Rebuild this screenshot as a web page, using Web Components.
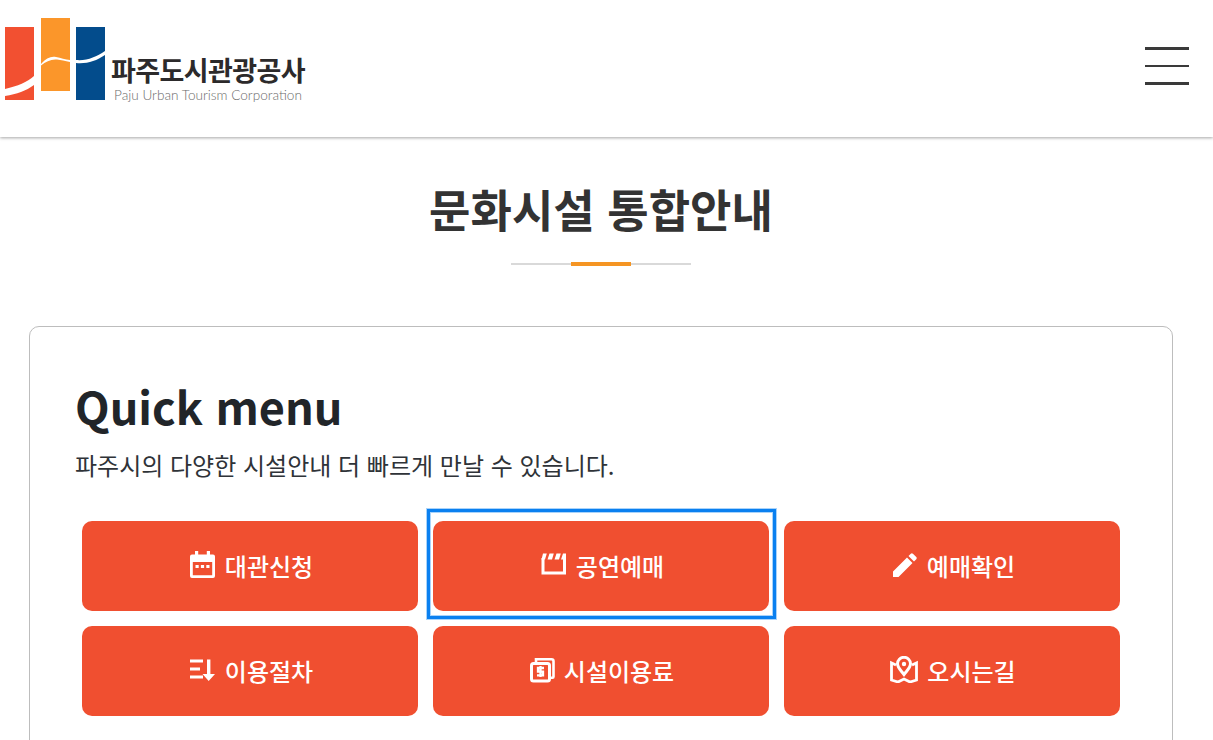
<!DOCTYPE html>
<html lang="ko">
<head>
<meta charset="utf-8">
<title>문화시설 통합안내</title>
<style>
html, body { margin: 0; height: 740px; overflow: hidden; background: #fff; }
body { font-family: "Noto Sans CJK KR", "Noto Sans", sans-serif; color: #212529; }
</style>
</head>
<body>
<site-header></site-header>
<page-title>문화시설 통합안내</page-title>
<quick-menu>
  <quick-button icon="calendar">대관신청</quick-button>
  <quick-button icon="clapper" focused>공연예매</quick-button>
  <quick-button icon="pen">예매확인</quick-button>
  <quick-button icon="sort">이용절차</quick-button>
  <quick-button icon="file">시설이용료</quick-button>
  <quick-button icon="map">오시는길</quick-button>
</quick-menu>

<script>
const ICONS = {
    calendar: `<svg width="27" height="27" viewBox="0 0 27 27"><path fill="#fff" fill-rule="evenodd" d="M6 0h3.200v3.500h8.600V0H21v3.500h3a2 2 0 0 1 2 2V25a2 2 0 0 1-2 2H3a2 2 0 0 1-2-2V5.500a2 2 0 0 1 2-2h3zM3.800 11v13.200h19.400V11z"/><path fill="#fff" d="M6.500 14h3.200v3H6.500zM11.900 14h3.200v3h-3.200zM17.300 14h3.200v3h-3.200z"/></svg>`,
    clapper: `<svg width="27" height="27" viewBox="0 0 27 27"><path fill="none" stroke="#fff" stroke-width="3" d="M3 7V22h21.500V3"/><path fill="#fff" d="M3 2.500h3.800L5 8.500H1.500zM9.500 2.500h4.300L12 8.500H7.500zM16.500 2.500h4.300L19 8.500h-4.500zM23 2.500h3V8.500h-5z"/></svg>`,
    pen: `<svg width="27" height="27" viewBox="0 0 27 27"><path fill="#fff" d="M2 26v-5.500L16 6.500 21.500 12 7.500 26zM17.500 5l2.300-2.300a1.500 1.500 0 0 1 2.100 0l3.400 3.400a1.500 1.500 0 0 1 0 2.100L23 10.500z"/></svg>`,
    sort: `<svg width="27" height="27" viewBox="0 0 27 27"><path fill="#fff" d="M1 3.500h13v3H1zM1 11.500h10v3H1zM1 19.500h13v3H1zM18 3.500h3.400v14.500H26L19.700 25l-6.200-7H18z"/></svg>`,
    file: `<svg width="25" height="27" viewBox="0 0 25 27"><path fill="none" stroke="#fff" stroke-width="2.600" d="M6 6V3.300h15.500a2 2 0 0 1 2 2v15.500a1 1 0 0 1-1 1H20"/><rect x="1.500" y="7.500" width="18" height="17.500" rx="2" fill="none" stroke="#fff" stroke-width="3"/><path fill="none" stroke="#fff" stroke-width="2.300" d="M14 12H8v3.700h5v3.700H7M10.500 10v11"/></svg>`,
    map: `<svg width="28" height="27" viewBox="0 0 28 27"><path fill="none" stroke="#fff" stroke-width="3" d="M14 18.500C10.500 14 7.500 11.500 7.500 7.800a6.500 6.500 0 0 1 13 0c0 3.700-3 6.200-6.500 10.700z"/><circle cx="14" cy="8" r="2.200" fill="#fff"/><path fill="none" stroke="#fff" stroke-width="2.800" d="M6 9 1.500 7v17l6.500 2 6-3 6 3 6.500-2V7L22 9"/></svg>`
};

class SiteHeader extends HTMLElement {
    constructor() {
        super();
        this.attachShadow({ mode: 'open' }).innerHTML = `
            <style>
                :host {
                    display: flex;
                    justify-content: space-between;
                    align-items: flex-start;
                    height: 137px;
                    box-sizing: border-box;
                    padding: 18px 24px 0 5px;
                    background: #fff;
                    box-shadow: 0 1px 3px rgba(0, 0, 0, .35);
                }
                .logo { display: flex; align-items: flex-start; gap: 5px; }
                .logo svg { display: block; }
                .names { margin-top: 40px; }
                .ko {
                    display: block;
                    font-family: "Liberation Sans", "Noto Sans CJK KR", sans-serif;
                    font-size: 27px;
                    font-weight: 700;
                    line-height: 28px;
                    letter-spacing: -0.6px;
                    color: #2c2a2b;
                    white-space: nowrap;
                }
                .en {
                    display: block;
                    margin: 2px 0 0 3px;
                    font: 300 13.600px/15px Lato, sans-serif;
                    color: #6b6b6b;
                    white-space: nowrap;
                }
                .burger { display: flex; flex-direction: column; gap: 15px; width: 44px; margin-top: 29px; }
                .burger i { display: block; height: 2.600px; background: #3a3a3a; }
            </style>
            <div class="logo">
                <svg width="101" height="82" viewBox="0 0 101 82">
                    <rect x="0" y="9" width="29" height="73" fill="#f25031"/>
                    <rect x="36" y="0" width="29" height="73" fill="#fb962a"/>
                    <rect x="71" y="9" width="29" height="73" fill="#034c8c"/>
                    <path fill="#fff" d="M0 71c13-3 22-7 29-13v9c-8 6-17 9-29 11z"/>
                    <path fill="#fff" d="M36 46c5-6 10-8 15-7 5 1 9 2.500 14 3v2c-5-1-9-2-13-2.500-6-.6-11 2-16 6z"/>
                    <path fill="#fff" d="M71 42c11 1 20-3 29-9v4c-9 6-18 9-29 8z"/>
                </svg>
                <div class="names">
                    <span class="ko">파주도시관광공사</span>
                    <span class="en">Paju Urban Tourism Corporation</span>
                </div>
            </div>
            <div class="burger"><i></i><i></i><i></i></div>
        `;
    }
}

class PageTitle extends HTMLElement {
    constructor() {
        super();
        this.attachShadow({ mode: 'open' }).innerHTML = `
            <style>
                :host { display: block; width: 1144px; margin-left: 29px; text-align: center; padding-top: 38px; }
                h1 { margin: 0; font-size: 45px; font-weight: 700; line-height: 68px; color: #333; }
                .rule {
                    width: 180px;
                    height: 2px;
                    margin: 20px auto 0;
                    background: #d9d9d9;
                    display: flex;
                    justify-content: center;
                    align-items: center;
                }
                .rule i { display: block; flex: none; width: 60px; height: 4px; background: #f59523; }
            </style>
            <h1><slot></slot></h1>
            <div class="rule"><i></i></div>
        `;
    }
}

class QuickMenu extends HTMLElement {
    constructor() {
        super();
        this.attachShadow({ mode: 'open' }).innerHTML = `
            <style>
                :host {
                    display: block;
                    box-sizing: border-box;
                    width: 1144px;
                    height: 440px;
                    margin: 61px 0 0 29px;
                    padding: 44px 45px 0;
                    border: 1px solid #bdbdbd;
                    border-radius: 10px;
                }
                h2 { margin: 0; font-size: 45px; font-weight: 700; line-height: 70px; color: #212529; }
                p { margin: 7px 0 0; font-size: 24px; font-weight: 400; line-height: 34px; color: #2f3338; }
                .grid {
                    display: grid;
                    grid-template-columns: repeat(3, 336px);
                    grid-auto-rows: 90px;
                    gap: 15px;
                    margin: 39px 0 0 7px;
                }
            </style>
            <h2>Quick menu</h2>
            <p>파주시의 다양한 시설안내 더 빠르게 만날 수 있습니다.</p>
            <div class="grid"><slot></slot></div>
        `;
    }
}

class QuickButton extends HTMLElement {
    constructor() {
        super();
        this.attachShadow({ mode: 'open' });
    }

    connectedCallback() {
        const icon = ICONS[this.getAttribute('icon')] || '';
        this.shadowRoot.innerHTML = `
            <style>
                :host {
                    display: flex;
                    position: relative;
                    align-items: center;
                    justify-content: center;
                    gap: 9px;
                    padding-left: 2px;
                    background: #f04f30;
                    border-radius: 10px;
                    color: #fff;
                    font-size: 24px;
                    font-weight: 500;
                }
                svg { display: block; margin-top: -3px; }
                span { margin-top: -2px; }
                .ring {
                    position: absolute;
                    left: -6px;
                    right: -7px;
                    top: -12px;
                    bottom: -8px;
                    border: 3px solid #0a80f0;
                    box-shadow: 0 0 0 1px rgba(10, 128, 240, .35), inset 0 0 0 1px rgba(10, 128, 240, .35);
                    pointer-events: none;
                }
            </style>
            ${icon}<span><slot></slot></span>
            ${this.hasAttribute('focused') ? '<div class="ring"></div>' : ''}
        `;
    }
}

customElements.define('site-header', SiteHeader);
customElements.define('page-title', PageTitle);
customElements.define('quick-menu', QuickMenu);
customElements.define('quick-button', QuickButton);
</script>
</body>
</html>
